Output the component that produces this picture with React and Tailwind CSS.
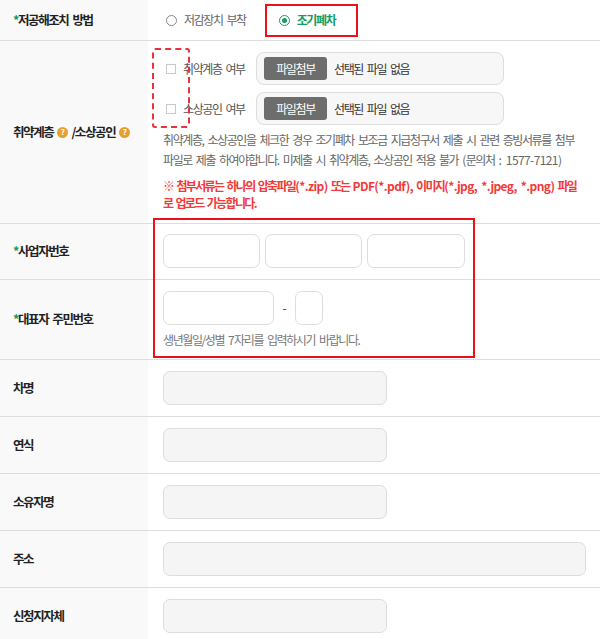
import React from 'react';

const LABEL = 'w-[148px] shrink-0 bg-[#f9f9f9] pl-[13px] flex items-center text-[12.5px] font-bold text-[#222]';

const Req = () => <span className="text-[#169b5f]">*</span>;

const Help = () => (
  <span className="inline-flex w-[11px] h-[11px] rounded-full bg-[#e5a030] text-white text-[8px] font-bold items-center justify-center ml-[4px] mr-[3px] tracking-normal leading-none">?</span>
);

// latin bits are not squeezed like the hangul
const L = ({ children }) => <span className="tracking-[-0.6px]">{children}</span>;

const Radio = ({ checked, children }) => (
  <label className="flex items-center gap-[7px]">
    <span className={`w-[11px] h-[11px] rounded-full border flex items-center justify-center bg-white ${checked ? 'border-[#169b5f]' : 'border-[#888]'}`}>
      {checked && <span className="w-[5px] h-[5px] rounded-full bg-[#169b5f]" />}
    </span>
    <span className={checked ? 'text-[#169b5f] font-bold' : 'text-[#666]'}>{children}</span>
  </label>
);

const FileRow = ({ label }) => (
  <div className="flex items-center h-[33px]">
    <div className="w-[93px] flex items-center">
      <span className="ml-[3px] w-[10px] h-[10px] border border-[#c8c8c8] bg-white" />
      <span className="ml-[7px] text-[#555]">{label}</span>
    </div>
    <div className="w-[248px] h-[33px] border border-[#ddd] rounded-[8px] bg-[#f7f7f7] flex items-center">
      <span className="ml-[7px] w-[63px] h-[23px] bg-[#6d6d6d] rounded-[3px] text-white flex items-center justify-center">파일첨부</span>
      <span className="ml-[7px] text-[#333]">선택된 파일 없음</span>
    </div>
  </div>
);

const SimpleRow = ({ label, w }) => (
  <div className="flex h-[57px] border-b border-[#ddd]">
    <div className={LABEL}>{label}</div>
    <div className="flex-1 pl-[15px] flex items-center">
      <div className={`${w} h-[34px] border border-[#ddd] rounded-[7px] bg-[#f5f5f5]`} />
    </div>
  </div>
);

export default function App() {
  return (
    <div className="w-[608px] h-[639px] overflow-hidden bg-white font-['Noto_Sans_CJK_KR',sans-serif] text-[12px] tracking-[-1.4px] [word-spacing:2.6px]">
      <div className="relative w-[600px]">
        {/* method */}
        <div className="flex h-[41px] border-b border-[#ddd]">
          <div className={LABEL}><Req />저공해조치 방법</div>
          <div className="flex-1 pl-[18px] flex items-center gap-[33px]">
            <Radio>저감장치 부착</Radio>
            <Radio checked>조기폐차</Radio>
          </div>
        </div>

        {/* vulnerable / small business */}
        <div className="flex h-[183px] border-b border-[#ddd]">
          <div className={LABEL}>취약계층<Help />/소상공인<Help /></div>
          <div className="flex-1 pl-[15px] pt-[11px]">
            <div className="flex flex-col gap-[7px]">
              <FileRow label="취약계층 여부" />
              <FileRow label="소상공인 여부" />
            </div>
            <p className="mt-[5px] w-[420px] leading-[20px] text-[#666]">
              취약계층, 소상공인을 체크한 경우 조기폐차 보조금 지급청구서 제출 시 관련 증빙서류를 첨부 파일로 제출 하여야합니다. 미제출 시 취약계층, 소상공인 적용 불가 <L>(</L>문의처 <L>: 1577-7121)</L>
            </p>
            <p className="mt-[7px] w-[420px] leading-[17px] text-[#f23a3a] font-bold tracking-[-1.65px] [word-spacing:2px]">
              ※ 첨부서류는 하나의 압축파일<L>(*.zip)</L> 또는 <L>PDF(*.pdf),</L> 이미지<L>(*.jpg, *.jpeg, *.png)</L> 파일로 업로드 가능합니다.
            </p>
          </div>
        </div>

        {/* business number */}
        <div className="flex h-[56px] border-b border-[#ddd]">
          <div className={LABEL}><Req />사업자번호</div>
          <div className="flex-1 pl-[15px] pt-[10px] flex gap-[5px]">
            <div className="w-[97px] h-[34px] border border-[#ddd] rounded-[7px] bg-white" />
            <div className="w-[97px] h-[34px] border border-[#ddd] rounded-[7px] bg-white" />
            <div className="w-[98px] h-[34px] border border-[#ddd] rounded-[7px] bg-white" />
          </div>
        </div>

        {/* resident number */}
        <div className="flex h-[80px] border-b border-[#ddd]">
          <div className={LABEL}><Req />대표자 주민번호</div>
          <div className="flex-1 pl-[15px] pt-[11px]">
            <div className="flex items-center">
              <div className="w-[111px] h-[34px] border border-[#ddd] rounded-[7px] bg-white" />
              <span className="w-[21px] text-center text-[#333] tracking-normal">-</span>
              <div className="w-[28px] h-[34px] border border-[#ddd] rounded-[7px] bg-white" />
            </div>
            <p className="mt-[6px] leading-[18px] text-[#777]">생년월일/성별 <L>7</L>자리를 입력하시기 바랍니다.</p>
          </div>
        </div>

        <SimpleRow label="차명" w="w-[224px]" />
        <SimpleRow label="연식" w="w-[224px]" />
        <SimpleRow label="소유자명" w="w-[224px]" />
        <SimpleRow label="주소" w="w-[423px]" />
        <SimpleRow label="신청지자체" w="w-[224px]" />

        {/* annotation overlays */}
        <div className="absolute left-[265px] top-[4px] w-[93px] h-[33px] border-2 border-[#e8111c]" />
        <div className="absolute left-[152px] top-[48px] w-[38px] h-[80px] border-2 border-dashed border-[#e8333a] rounded-[3px]" />
        <div className="absolute left-[153px] top-[218px] w-[322px] h-[140px] border-2 border-[#e8111c]" />
      </div>
    </div>
  );
}
